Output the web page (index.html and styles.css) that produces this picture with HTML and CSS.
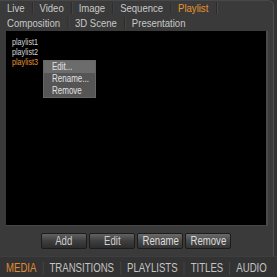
FILE: index.html
```html
<!DOCTYPE html>
<html>
<head>
<meta charset="utf-8">
<link rel="stylesheet" href="styles.css">
</head>
<body>
<div class="app">
  <div class="panel">
    <div class="tabrow row1">
      <div class="tabs">
        <span class="tab">Live</span><span class="sep"></span>
        <span class="tab">Video</span><span class="sep"></span>
        <span class="tab">Image</span><span class="sep"></span>
        <span class="tab">Sequence</span><span class="sep"></span>
        <span class="tab active">Playlist</span><span class="sep"></span>
      </div>
      <svg class="arrow" width="5" height="8" viewBox="0 0 5 8"><path d="M0 0 L5 4 L0 8 Z" fill="#c8c8c8"/></svg>
    </div>
    <div class="tabrow row2">
      <div class="tabs">
        <span class="tab">Composition</span><span class="sep"></span>
        <span class="tab">3D Scene</span><span class="sep"></span>
        <span class="tab">Presentation</span>
      </div>
    </div>
    <div class="list">
      <div class="item"><span>playlist1</span></div>
      <div class="item"><span>playlist2</span></div>
      <div class="item selected"><span>playlist3</span></div>
      <div class="menu">
        <div class="mi hover"><span>Edit...</span></div>
        <div class="mi"><span>Rename...</span></div>
        <div class="mi"><span>Remove</span></div>
      </div>
    </div>
    <div class="buttons">
      <button class="btn"><span>Add</span></button>
      <button class="btn"><span>Edit</span></button>
      <button class="btn lit"><span>Rename</span></button>
      <button class="btn lit"><span>Remove</span></button>
    </div>
  </div>
  <div class="bottombar">
    <div class="btabs">
      <span class="btab active">MEDIA</span><span class="bsep"></span>
      <span class="btab">TRANSITIONS</span><span class="bsep"></span>
      <span class="btab">PLAYLISTS</span><span class="bsep"></span>
      <span class="btab">TITLES</span><span class="bsep"></span>
      <span class="btab">AUDIO</span>
    </div>
  </div>
</div>
</body>
</html>
```

FILE: styles.css
```css
* { box-sizing: border-box; }
html, body { margin: 0; padding: 0; }
body {
  width: 277px;
  height: 277px;
  overflow: hidden;
  background: #333;
  font-family: "Liberation Sans", Arial, sans-serif;
  color: #c8c8c8;
}
.app {
  width: 277px;
  height: 277px;
  display: flex;
  flex-direction: column;
}
.panel {
  height: 256px;
  width: 274px;
  background: #3a3a3a;
  border-top: 1px solid #484848;
  border-right: 1px solid #4e4e4e;
  border-top-right-radius: 6px;
  display: flex;
  flex-direction: column;
}
.tabrow {
  display: flex;
  align-items: center;
  font-size: 11.5px;
  padding-left: 7px;
}
.row1 { height: 14px; padding-right: 9px; }
.row2 { height: 16px; }
.tabs {
  display: flex;
  align-items: center;
  flex: none;
  transform: scaleX(0.83);
  transform-origin: 0 50%;
}
.tab { line-height: 14px; white-space: nowrap; }
.tab.active { color: #e8962e; }
.sep {
  width: 2px;
  height: 12px;
  margin: 0 7px 0 9px;
  border-left: 1px solid #2a2a2a;
  border-right: 1px solid #4c4c4c;
}
.arrow { display: block; margin-left: auto; }
.list {
  position: relative;
  margin-left: 6px;
  width: 262px;
  height: 195px;
  background: #000;
  border-right: 2px solid #4a4a4a;
  border-bottom: 1px solid #484848;
  padding: 6px 0 0 6px;
  font-size: 9px;
}
.item { line-height: 10px; color: #d8d8d8; }
.item span, .mi span {
  display: inline-block;
  transform: scaleX(0.8);
  transform-origin: 0 50%;
}
.item.selected { color: #e8962e; }
.menu {
  position: absolute;
  left: 37px;
  top: 29px;
  width: 53px;
  background: #555;
  border: 1px solid #666;
  font-size: 10px;
  color: #e0e0e0;
}
.mi { height: 12px; line-height: 12px; padding-left: 8px; white-space: nowrap; }
.mi.hover { background: #6c6c6c; }
.buttons {
  display: flex;
  justify-content: center;
  gap: 2px;
  margin-top: 7px;
  padding-right: 1px;
}
.btn {
  width: 46px;
  height: 16px;
  padding: 0;
  border: 1px solid #1c1c1c;
  border-radius: 2px;
  background: linear-gradient(#626262, #3e3e3e 50%, #2c2c2c);
  color: #cfcfcf;
  font-family: "Liberation Sans", Arial, sans-serif;
  font-size: 12px;
  line-height: 14px;
  white-space: nowrap;
  overflow: hidden;
}
.btn span { display: inline-block; transform: scaleX(0.8); }
.btn.lit { background: linear-gradient(#6a6a6a, #484848 50%, #333); color: #dcdcdc; }
.bottombar {
  flex: 1;
  padding: 2px 0 0 6px;
  background: #333;
  border-top: 1px solid #3e3e3e;
  overflow: hidden;
}
.btabs {
  width: 326px;
  height: 18px;
  display: flex;
  align-items: center;
  justify-content: space-between;
  font-size: 12px;
  transform: scaleX(0.8);
  transform-origin: 0 50%;
}
.btab { color: #c4c4c4; white-space: nowrap; }
.btab.active { color: #e08a32; }
.bsep {
  width: 1px;
  height: 13px;
  background: #4a4a4a;
}
```
